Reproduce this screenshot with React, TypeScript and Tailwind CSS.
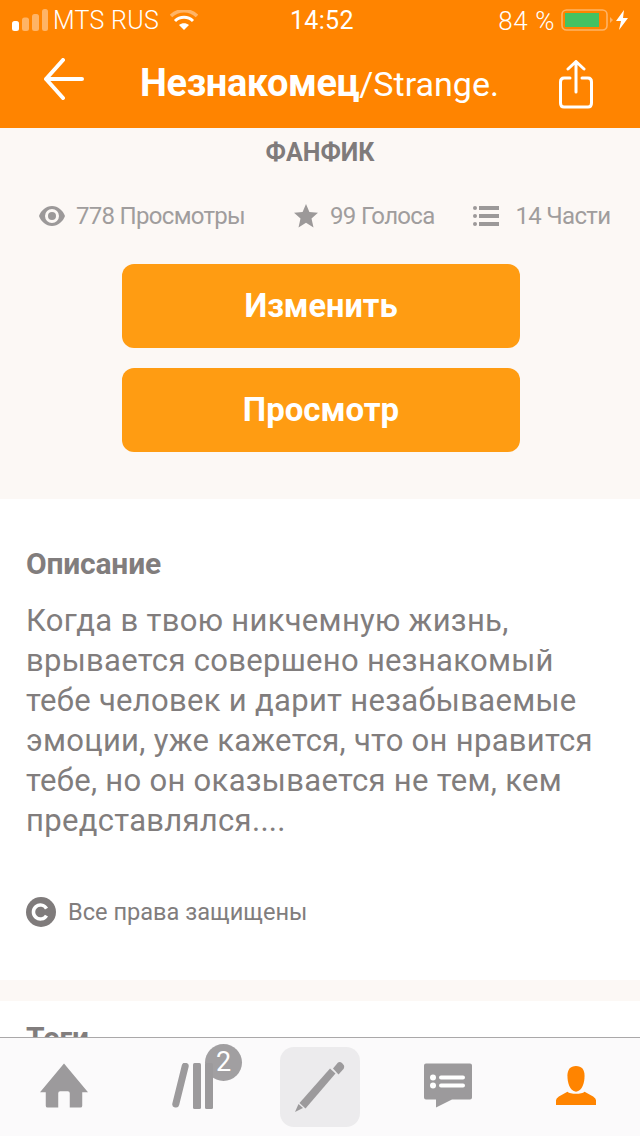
import React from "react";

const F = "font-['Roboto','Liberation_Sans',sans-serif]";

function Stat({ icon, text, gap }: { icon: React.ReactNode; text: string; gap: string }) {
  return (
    <div className={`flex items-center ${gap}`}>
      {icon}
      <span className="text-[24px] leading-[30px] text-[#a09d9d] tracking-[-0.7px] whitespace-nowrap">{text}</span>
    </div>
  );
}

export default function App() {
  return (
    <div className={`${F} relative w-[640px] h-[1136px] overflow-hidden bg-white`}>
      <header className="bg-[#ff8400] text-white h-[128px] flex flex-col">
        <div className="h-[40px] relative flex items-center justify-between pl-[12px] pr-[8px]">
          <div className="flex items-center">
            <svg width="36" height="22" viewBox="0 0 36 22" className="mr-[5px]">
              <rect x="0" y="12" width="7" height="10" rx="2.5" fill="#fff" />
              <rect x="10" y="8.5" width="7" height="13.5" rx="2.5" fill="#ffb466" />
              <rect x="20" y="5" width="7" height="17" rx="2.5" fill="#ffb466" />
              <rect x="30" y="0" width="6" height="22" rx="2.5" fill="#ffb466" />
            </svg>
            <span className="text-[25px] leading-[30px] font-light tracking-[0.3px] pt-[2px]">MTS RUS</span>
            <svg width="28" height="21" viewBox="0 0 28 21" className="ml-[11px]">
              <path d="M1 6 C8 -1 20 -1 27 6" fill="none" stroke="#ffb466" strokeWidth="3.5" />
              <path d="M5 11 C10 6 18 6 23 11" fill="none" stroke="#fff" strokeWidth="3" />
              <path d="M9 15 C12 12.5 16 12.5 19 15 L14 20 Z" fill="#fff" />
            </svg>
          </div>
          <span className="absolute left-[290px] top-[6px] text-[25px] leading-[30px] font-normal tracking-[0.3px]">14:52</span>
          <div className="flex items-center">
            <span className="text-[26px] leading-[30px] font-light tracking-[0.6px] mr-[6px] pt-[2px]">84 %</span>
            <svg width="52" height="22" viewBox="0 0 52 22">
              <rect x="1" y="1" width="45" height="20" rx="4.5" fill="none" stroke="#ffb466" strokeWidth="1.6" />
              <rect x="4" y="4" width="34" height="14" fill="#44c263" />
              <path d="M49 8 L52 11 L49 14 Z" fill="#ffb466" />
            </svg>
            <svg width="12" height="20" viewBox="0 0 12 20" className="ml-[3px] mr-[4px]">
              <path d="M8 0 L0 11 H5 L3 20 L12 8 H7 Z" fill="#fff" />
            </svg>
          </div>
        </div>
        <div className="flex-1 relative flex items-center justify-center pt-[5px]">
          <svg width="40" height="42" viewBox="0 0 40 42" className="absolute left-[44px] top-[18px]" fill="none" stroke="#fff" strokeWidth="4" strokeLinecap="round" strokeLinejoin="round">
            <path d="M38 21 H2 M19 2 L2 21 L19 40" />
          </svg>
          <div className="whitespace-nowrap leading-[44px] -ml-[1px]">
            <span className="font-bold text-[38px] tracking-[-0.4px]">Незнакомец</span>
            <span className="font-normal text-[34px]">/Strange.</span>
          </div>
          <svg width="34" height="50" viewBox="0 0 34 50" className="absolute left-[559px] top-[20px]" fill="none" stroke="#fff" strokeWidth="3" strokeLinecap="round" strokeLinejoin="round">
            <path d="M17 32 V2 M9 9 L17 1.5 L25 9" />
            <path d="M11 18 H5 Q1.5 18 1.5 22 V43 Q1.5 47 5 47 H29 Q32.5 47 32.5 43 V22 Q32.5 18 29 18 H23" />
          </svg>
        </div>
      </header>

      <section className="bg-[#fcf8f5] h-[371px] flex flex-col items-center">
        <h2 className="text-[25px] leading-[28px] font-bold text-[#7f7b7b] mt-[11px]">ФАНФИК</h2>
        <div className="w-full flex items-center pl-[39px] mt-[34px] h-[30px]">
          <Stat
            gap="gap-[11px]"
            text="778 Просмотры"
            icon={
              <svg width="26" height="20" viewBox="0 0 26 20">
                <path fillRule="evenodd" fill="#9c9999" d="M13 0 C19 0 24 4.5 26 10 C24 15.5 19 20 13 20 C7 20 2 15.5 0 10 C2 4.5 7 0 13 0 Z M13 3 A7 7 0 1 0 13 17 A7 7 0 1 0 13 3 Z" />
                <circle cx="13" cy="10" r="4" fill="#9c9999" />
              </svg>
            }
          />
          <div className="ml-[49px]">
            <Stat
              gap="gap-[12px]"
              text="99 Голоса"
              icon={
                <svg width="24" height="24" viewBox="0 0 24 24">
                  <path fill="#9c9999" d="M12 0 L15.4 8 L24 8.8 L17.5 14.5 L19.5 23.5 L12 18.8 L4.5 23.5 L6.5 14.5 L0 8.8 L8.6 8 Z" />
                </svg>
              }
            />
          </div>
          <div className="ml-[38px]">
            <Stat
              gap="gap-[17px]"
              text="14 Части"
              icon={
                <svg width="26" height="20" viewBox="0 0 26 20" fill="#9c9999">
                  <circle cx="2" cy="2" r="2" />
                  <circle cx="2" cy="10" r="2" />
                  <circle cx="2" cy="18" r="2" />
                  <rect x="6" y="0" width="20" height="4" />
                  <rect x="6" y="8" width="20" height="4" />
                  <rect x="6" y="16" width="20" height="4" />
                </svg>
              }
            />
          </div>
        </div>
        <button className="mt-[33px] ml-[2px] w-[398px] h-[84px] rounded-[12px] bg-[#ff9c12] text-white text-[32.5px] font-bold">Изменить</button>
        <button className="mt-[20px] ml-[2px] w-[398px] h-[84px] rounded-[12px] bg-[#ff9c12] text-white text-[33px] font-bold">Просмотр</button>
      </section>

      <section className="bg-white h-[481px] pl-[26px] pr-[24px] pt-[49px]">
        <h3 className="text-[30px] leading-[32px] font-bold text-[#817d7d] tracking-[-0.2px]">Описание</h3>
        <p className="mt-[21px] text-[31px] leading-[40px] text-[#817d7d] w-[590px] tracking-[0.3px]">
          Когда в твою никчемную жизнь, врывается совершено незнакомый тебе человек и дарит незабываемые эмоции, уже кажется, что он нравится тебе, но он оказывается не тем, кем представлялся....
        </p>
        <div className="mt-[56px] flex items-center gap-[12px]">
          <svg width="30" height="30" viewBox="0 0 30 30">
            <circle cx="15" cy="15" r="15" fill="#7f7b7b" />
            <path d="M20.5 11.5 A7 7 0 1 0 20.5 18.5" fill="none" stroke="#fff" strokeWidth="3.5" />
          </svg>
          <span className="text-[23.6px] leading-[28px] text-[#817d7d]">Все права защищены</span>
        </div>
      </section>

      <div className="bg-[#fcf8f5] h-[21px]" />
      <section className="bg-white pl-[26px] pt-[21px]">
        <h3 className="text-[30px] leading-[32px] font-bold text-[#817d7d]">Теги</h3>
      </section>

      <nav className="absolute left-0 right-0 bottom-0 h-[99px] bg-[#fbfafb] border-t border-[#aaa8a9] flex items-start">
        <div className="w-[128px] flex justify-center pt-[25px]">
          <svg width="48" height="45" viewBox="0 0 50 46" fill="#9c9a9c">
            <path d="M25 0 L50 30 H44 V44 Q44 46 42 46 H31 V31 Q31 29 29 29 H21 Q19 29 19 31 V46 H8 Q6 46 6 44 V30 H0 Z" />
          </svg>
        </div>
        <div className="w-[128px] relative flex justify-center pt-[25px]">
          <svg width="46" height="46" viewBox="0 0 46 46" fill="#9c9a9c" className="ml-[-1px]">
            <rect x="8" y="-1" width="7" height="46" rx="3.5" transform="rotate(14 11 22)" />
            <rect x="24" y="0" width="8" height="46" rx="1.5" />
            <rect x="36" y="0" width="8" height="46" rx="1.5" />
          </svg>
          <div className="absolute left-[77px] top-[6px] w-[37px] h-[37px] rounded-full bg-[#9c9a9c]/95 text-white text-[27px] leading-[37px] text-center font-normal">2</div>
        </div>
        <div className="w-[128px] flex justify-center pt-[9px]">
          <div className="w-[80px] h-[80px] rounded-[14px] bg-[#ecebed] flex items-center justify-center">
            <svg width="50" height="50" viewBox="0 0 50 50" fill="#9c9a9c">
              <path d="M39 6.5 L44 0.5 Q46 -0.5 48 1 L50 3.5 Q50.5 5.5 49.5 7 L44.5 12.5 Z" transform="translate(-1 0)" />
              <path d="M36 9 L41.5 14 L11.5 49 L5.5 43.5 Z" transform="translate(-1 -2.5)" />
              <path d="M3.5 42 L8 46 L0 50 Z" />
            </svg>
          </div>
        </div>
        <div className="w-[128px] flex justify-center pt-[25px]">
          <svg width="48" height="45" viewBox="0 0 48 44">
            <path fill="#9c9a9c" d="M2 0 H46 Q48 0 48 2 V34 Q48 36 46 36 H28 L12 44 V36 H2 Q0 36 0 34 V2 Q0 0 2 0 Z" />
            <circle cx="9" cy="14" r="3" fill="#fff" />
            <circle cx="9" cy="22" r="3" fill="#fff" />
            <rect x="15" y="12" width="26" height="4" rx="2" fill="#fff" />
            <rect x="15" y="20" width="26" height="4" rx="2" fill="#fff" />
          </svg>
        </div>
        <div className="w-[128px] flex justify-center pt-[27px]">
          <svg width="40" height="41" viewBox="0 0 42 41" fill="#ff8400">
            <path d="M21 0 C27 0 30 4 30 10 C30 17 28 26 21 27 C14 26 12 17 12 10 C12 4 15 0 21 0 Z" />
            <path d="M12 27 C15 30 27 30 30 27 L39 32 Q42 34 42 36 V41 H0 V36 Q0 34 3 32 Z" />
          </svg>
        </div>
      </nav>
    </div>
  );
}
